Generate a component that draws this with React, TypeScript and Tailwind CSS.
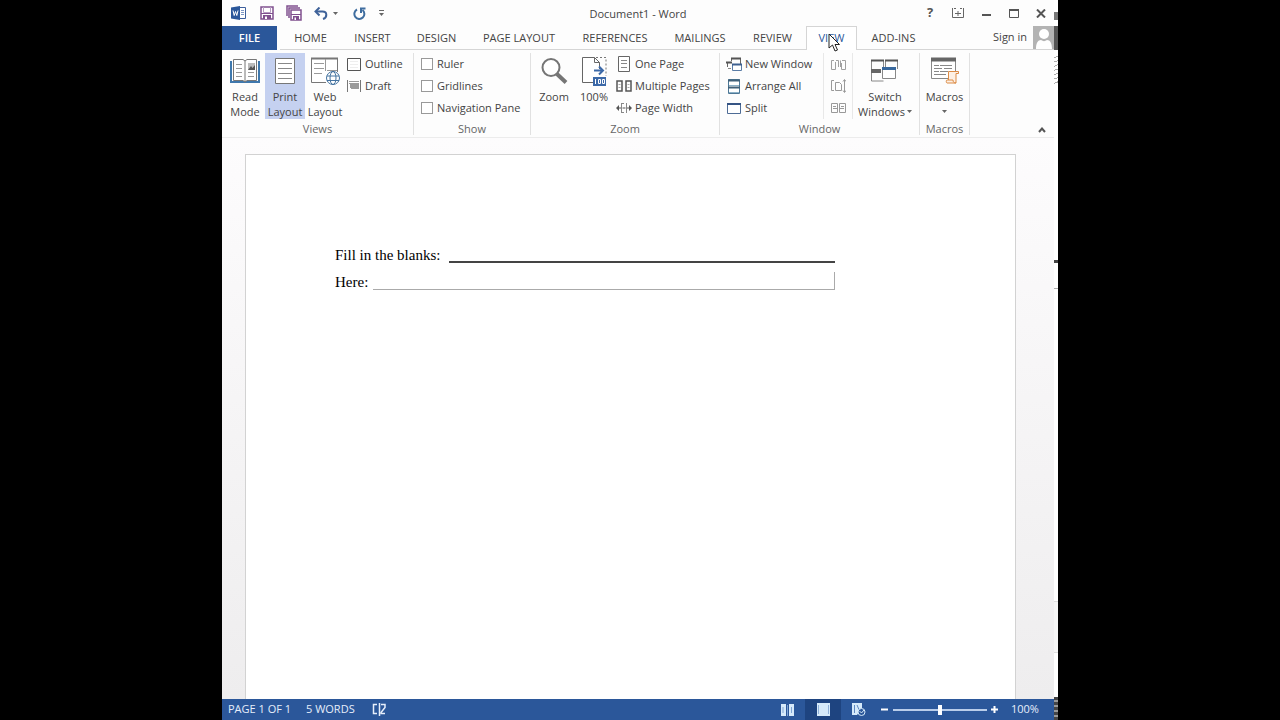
import { useState } from "react";
import type { ReactNode } from "react";

const tabs = [
  { label: "HOME", width: "w-[61px]" },
  { label: "INSERT", width: "w-[63px]" },
  { label: "DESIGN", width: "w-[65px]" },
  { label: "PAGE LAYOUT", width: "w-[100px]" },
  { label: "REFERENCES", width: "w-[92px]" },
  { label: "MAILINGS", width: "w-[78px]" },
  { label: "REVIEW", width: "w-[67px]" },
  { label: "VIEW", width: "w-[51px]" },
  { label: "ADD-INS", width: "w-[73px]" },
];

type IconProps = { w: number; h: number; children: ReactNode };

function Icon({ w, h, children }: IconProps) {
  return (
    <svg width={w} height={h} viewBox={`0 0 ${w} ${h}`} fill="none" className="shrink-0" aria-hidden>
      {children}
    </svg>
  );
}

function WordLogo() {
  return (
    <Icon w={16} h={16}>
      <path d="M8.5 2.5h6v11h-6" fill="#fff" stroke="#3d5f9c" />
      <path d="M10 5.5h3M10 7.5h3M10 9.5h3" stroke="#7d97c4" />
      <path d="M0 2.5 9 1v14l-9-1.5z" fill="#2b579a" />
      <path d="m2 5.5 1.2 5 1.3-4 1.3 4 1.2-5" stroke="#fff" />
    </Icon>
  );
}

function SaveIcon() {
  return (
    <Icon w={14} h={14}>
      <path d="M1 1h12v12H1z" fill="#fff" stroke="#80508f" strokeWidth="1.5" />
      <path d="M3.5 1v5.5h7V1" stroke="#b79cc2" />
      <path d="M1 7.5h12" stroke="#80508f" />
      <path d="M3 9h8v4H3z" fill="#80508f" />
      <path d="M5 10.5h2V13H5z" fill="#fff" />
    </Icon>
  );
}

function SaveAllIcon() {
  return (
    <Icon w={16} h={16}>
      <path d="M1 11V1h11M3 13V3h11" stroke="#80508f" strokeWidth="1.5" />
      <path d="M5 5h10v10H5z" fill="#fff" stroke="#80508f" strokeWidth="1.5" />
      <path d="M5 9.5h10" stroke="#80508f" />
      <path d="M7 11h6v4H7z" fill="#80508f" />
      <path d="M8.5 12.5H10V15H8.500z" fill="#fff" />
    </Icon>
  );
}

function UndoIcon() {
  return (
    <Icon w={14} h={13}>
      <path d="M2 4.500h6.500c5 0 5 6 .5 7.500" stroke="#3f6299" strokeWidth="2" />
      <path d="M5.500.5 1.500 4.500l4 4" stroke="#3f6299" strokeWidth="2" />
    </Icon>
  );
}

function RedoIcon() {
  return (
    <Icon w={13} h={13}>
      <path d="M4 2.500a5 5 0 1 0 5.500.5" stroke="#3f6d9f" strokeWidth="2" />
      <path d="M12.500 1.500H8v4.500" stroke="#3f6d9f" strokeWidth="2" />
    </Icon>
  );
}

function Caret() {
  return (
    <Icon w={5} h={3}>
      <path d="M0 0h5L2.500 3z" fill="#666" />
    </Icon>
  );
}

function ReadModeIcon() {
  return (
    <Icon w={30} h={26}>
      <path d="M1 3v21h28V3" stroke="#3f78ad" strokeWidth="2" />
      <path d="M3.500 1.500h9.500l2 1.500 2-1.500h9.500v21H17l-2 1.500-2-1.500H3.500z" fill="#fff" stroke="#777" />
      <path d="M15 3v21" stroke="#777" />
      <path d="M6 6.500h6M6 10.500h6M6 14.500h6M6 18.500h6M18 14.500h6M18 18.500h6" stroke="#999" />
      <path d="M18 5h7v7h-7z" fill="#bbb" />
      <path d="m18 12 3-4 1.500 2L25 7v5z" fill="#555" />
    </Icon>
  );
}

function PrintLayoutIcon() {
  return (
    <Icon w={20} h={26}>
      <path d="M.5.5h19v25H.5z" fill="#fff" stroke="#777" />
      <path d="M3 5.500h14M3 10.500h14M3 15.500h14M3 20.500h14" stroke="#888" />
    </Icon>
  );
}

function WebLayoutIcon() {
  return (
    <Icon w={30} h={28}>
      <path d="M16 25.500H1.500v-24h26V15" fill="#fff" stroke="#777" />
      <path d="M1 1.500h27" stroke="#777" strokeWidth="2" />
      <path d="M4 6.500h10M4 11.500h10M4 16.500h8M15.500 2v12M17 13.500h10" stroke="#999" />
      <circle cx="23" cy="21" r="6.500" fill="#fff" stroke="#43729f" />
      <ellipse cx="23" cy="21" rx="3" ry="6.500" stroke="#43729f" />
      <path d="M17 19h12M17 23.500h12" stroke="#43729f" />
    </Icon>
  );
}

function OutlineIcon() {
  return (
    <Icon w={14} h={13}>
      <path d="M.5.5h13v12H.5z" fill="#fff" stroke="#555" />
      <path d="M3 3.500h8M3 6.500h8M3 9.500h8" stroke="#eee" />
    </Icon>
  );
}

function DraftIcon() {
  return (
    <Icon w={14} h={12}>
      <path d="M.5 0v12M13.500 0v12" stroke="#777" />
      <path d="M2 1.500h10M2 3.500h10M4 8.500h8" stroke="#999" />
      <path d="M3 3h9v5H3z" fill="#999" />
    </Icon>
  );
}

function MagnifierIcon() {
  return (
    <Icon w={28} h={28}>
      <circle cx="11" cy="10.500" r="8.500" fill="#fff" stroke="#757575" strokeWidth="2" />
      <path d="m17 17 9 8.500" stroke="#757575" strokeWidth="4" />
    </Icon>
  );
}

function HundredIcon() {
  return (
    <Icon w={26} h={30}>
      <path d="M12 26.500H1.500v-25h12l5 5V13" fill="#fff" stroke="#666" />
      <path d="M13.500 1.500v5h5" stroke="#666" />
      <path d="M15 1.500h10V20" stroke="#777" strokeDasharray="2 2" />
      <path d="M13 14.500h9M18 10.500l4 4-4 4" stroke="#3c69a8" strokeWidth="2" />
      <path d="M12 21h13v9H12z" fill="#3c69a8" />
      <path d="M14.500 23v5M17.500 23.500h2v4h-2zM21.500 23.500h2v4h-2z" stroke="#fff" />
    </Icon>
  );
}

function OnePageIcon() {
  return (
    <Icon w={12} h={16}>
      <path d="M.5.5h11v15H.5z" fill="#fff" stroke="#666" />
      <path d="M3 4.500h6M3 7.500h6M3 11.500h6" stroke="#888" />
    </Icon>
  );
}

function MultiplePagesIcon() {
  return (
    <Icon w={16} h={12}>
      <path d="M1 1h5v10H1zM10 1h5v10h-5z" fill="#fff" stroke="#555" strokeWidth="1.500" />
      <path d="M2.500 4.500h2M2.500 7.500h2M11.500 4.500h2M11.500 7.500h2" stroke="#aaa" />
    </Icon>
  );
}

function PageWidthIcon() {
  return (
    <Icon w={16} h={12}>
      <path d="M5.500 1v10M10.500 1v10M6 1.500h2M6 10.500h2" stroke="#888" />
      <path d="M2 6h3M6.500 6h3M11 6h3" stroke="#555" />
      <path d="M3 3v6L0 6zM13 3v6l3-3z" fill="#555" />
    </Icon>
  );
}

function NewWindowIcon() {
  return (
    <Icon w={16} h={14}>
      <path d="M5.500 4V1.500h9V7M1.500 10V5.500H6" stroke="#666" />
      <path d="M5 1.500h10M0 5.500h6" stroke="#555" strokeWidth="2" />
      <path d="M6.500 7.500h9v6h-9z" fill="#fff" stroke="#5a7ca6" />
      <path d="M6 7.500h10" stroke="#3d5f8f" strokeWidth="2" />
      <path d="M2 11.500h3" stroke="#888" />
    </Icon>
  );
}

function ArrangeIcon() {
  return (
    <Icon w={12} h={15}>
      <path d="M.5.5h11v14H.5z" fill="#fff" stroke="#4e7896" />
      <path d="M0 1.500h12M0 8.500h12" stroke="#3f6079" strokeWidth="2" />
      <path d="M1 6.500h10M1 13.500h10" stroke="#8db2c8" />
    </Icon>
  );
}

function SplitIcon() {
  return (
    <Icon w={14} h={11}>
      <path d="M.5 1v9.500h13V1" fill="#fff" stroke="#4e6c96" />
      <path d="M0 1h14" stroke="#355484" strokeWidth="2" />
    </Icon>
  );
}

function SideBySideIcon() {
  return (
    <Icon w={15} h={11}>
      <path d="M.5 10.500v-9H3M.5 10.500h4V3M5 1.500h2.500V8M9.500 8V1.500M11 1.500h3.500v9h-4V4" stroke="#a0a0a0" />
    </Icon>
  );
}

function SyncScrollIcon() {
  return (
    <Icon w={15} h={14}>
      <path
        d="M3 1.500H.5v10H3M4.500 11.500v-8h4l2 2v6zM13.500 1v12M12 2.500l1.500-2 1.500 2M12 11.500l1.500 2 1.500-2"
        stroke="#999"
      />
    </Icon>
  );
}

function ResetPositionIcon() {
  return (
    <Icon w={15} h={12}>
      <path d="M.5 1.500h6v9h-6zM8.500 1.500h6v9h-6zM2 6.500h4M9 6.500h4M2 4.500h3M10 4.500h3" stroke="#999" />
    </Icon>
  );
}

function SwitchIcon() {
  return (
    <Icon w={28} h={24}>
      <path d="M.5 1v21h12M.5 1.500h12V8M14.500 8V1.500h12V10" stroke="#888" />
      <path d="M0 1.500h13M14 1.500h13" stroke="#555" strokeWidth="2" />
      <path d="M0 10h10v4H0z" fill="#666" />
      <path d="M11.500 9.500h13v10h-13z" fill="#fff" stroke="#888" />
      <path d="M11 9.500h14" stroke="#38689d" strokeWidth="3" />
    </Icon>
  );
}

function MacrosIcon() {
  return (
    <Icon w={30} h={28}>
      <path d="M1.500 1.500h24v20h-24z" fill="#fff" stroke="#888" />
      <path d="M1 2.500h25" stroke="#666" strokeWidth="4" />
      <path d="M4 8.500h5M10 8.500h12M4 11.500h8M14 11.500h8M4 14.500h5M10 14.500h8M4 17.500h12" stroke="#888" />
      <path d="M18.500 23v-8.500h10v2H26V26h-9c-1 0-1-3 0-3h6c0 2 1 3 3 3" fill="#fdf0e4" stroke="#dc8b45" />
    </Icon>
  );
}

function PointerIcon() {
  return (
    <Icon w={12} h={19}>
      <path d="M1 1v14l3.500-3 2.500 6 2.500-1L7 11.500h4.500z" fill="#fff" stroke="#222" />
    </Icon>
  );
}

function Group({ label, width, children }: { label: string; width: string; children: ReactNode }) {
  return (
    <section
      aria-label={label}
      className={`flex h-[82px] shrink-0 flex-col justify-between border-r border-[#e1e1e1] ${width}`}
    >
      <div className="flex">{children}</div>
      <div className="text-center leading-3 text-[#666]">{label}</div>
    </section>
  );
}

type BigButtonProps = { icon: ReactNode; lines: string[]; width: string; active?: boolean; caret?: boolean };

function BigButton({ icon, lines, width, active, caret }: BigButtonProps) {
  return (
    <button
      type="button"
      aria-pressed={active}
      className={`flex h-[66px] shrink-0 flex-col items-center ${width} ${active ? "bg-[#c5d1f0]" : "hover:bg-[#e3e9f7]"}`}
    >
      <span className="flex h-9 items-center justify-center">{icon}</span>
      {lines.map((line, index) => (
        <span key={line} className="flex items-center gap-0.5 leading-[15px] whitespace-nowrap">
          {line}
          {caret && index === 1 ? <Caret /> : null}
        </span>
      ))}
      {caret && lines.length === 1 ? (
        <span className="flex h-[15px] items-center">
          <Caret />
        </span>
      ) : null}
    </button>
  );
}

function SmallButton({ icon, label }: { icon: ReactNode; label: string }) {
  return (
    <button type="button" className="flex h-[22px] items-center gap-[3px] whitespace-nowrap hover:bg-[#e3e9f7]">
      <span className="flex w-4 justify-center">{icon}</span>
      {label}
    </button>
  );
}

function ShowOption({ label }: { label: string }) {
  return (
    <label className="flex h-[22px] items-center gap-1 whitespace-nowrap">
      <input type="checkbox" className="size-3 appearance-none border border-[#999] bg-white checked:bg-[#2b579a]" />
      {label}
    </label>
  );
}

function TitleBar() {
  return (
    <header className="relative flex h-[26px] shrink-0 items-center justify-between bg-[#fdfdfd] pl-[9px]">
      <div className="flex items-center">
        <WordLogo />
        <button type="button" aria-label="Save" className="ml-[13px]">
          <SaveIcon />
        </button>
        <button type="button" aria-label="Save all" className="ml-3">
          <SaveAllIcon />
        </button>
        <button type="button" aria-label="Undo" className="ml-3 flex items-center gap-[5px]">
          <UndoIcon />
          <Caret />
        </button>
        <button type="button" aria-label="Redo" className="ml-[15px]">
          <RedoIcon />
        </button>
        <button type="button" aria-label="Customize toolbar" className="ml-[13px] flex flex-col gap-0.5">
          <span className="h-px w-[5px] bg-[#666]" />
          <Caret />
        </button>
      </div>
      <h1 className="pointer-events-none absolute inset-x-0 top-1.5 text-center leading-4">Document1 - Word</h1>
      <div className="flex items-center text-[#555]">
        <button type="button" aria-label="Help" className="w-7 text-[13px] font-bold">
          ?
        </button>
        <button type="button" aria-label="Ribbon display options" className="flex w-7 justify-center">
          <Icon w={12} h={10}>
            <path d="M.5 0v9.500h11V0M2 .5h2M8 .5h2M3 5.500h6M6 3v5" stroke="#666" />
          </Icon>
        </button>
        <button type="button" aria-label="Minimize" className="flex w-7 justify-center">
          <Icon w={9} h={10}>
            <path d="M0 7h9" stroke="#555" strokeWidth="2" />
          </Icon>
        </button>
        <button type="button" aria-label="Maximize" className="flex w-7 justify-center">
          <Icon w={10} h={9}>
            <path d="M.5.5h9v8h-9z" stroke="#555" />
            <path d="M0 1h10" stroke="#555" strokeWidth="2" />
          </Icon>
        </button>
        <button type="button" aria-label="Close" className="flex w-[26px] justify-center">
          <Icon w={10} h={9}>
            <path d="m1 .5 8 8M9 .5l-8 8" stroke="#555" strokeWidth="2" />
          </Icon>
        </button>
      </div>
    </header>
  );
}

function TabBar({ active, onSelect }: { active: string; onSelect: (label: string) => void }) {
  return (
    <nav className="flex h-6 shrink-0 bg-[#fdfdfd] text-[#444]">
      <button type="button" className="mr-[3px] w-[55px] bg-[#2b579a] font-semibold text-white">
        FILE
      </button>
      {tabs.map(({ label, width }) => (
        <button
          key={label}
          type="button"
          onClick={() => onSelect(label)}
          className={`shrink-0 whitespace-nowrap ${width} ${
            label === active
              ? "border-x border-t border-[#d5d5d5] bg-white text-[#2b579a]"
              : "border-b border-[#d5d5d5] pt-0.5"
          }`}
        >
          {label}
        </button>
      ))}
      <div className="flex flex-1 items-center justify-end border-b border-[#d5d5d5]">
        <a href="#sign-in" className="mr-1.5 whitespace-nowrap">
          Sign in
        </a>
        <Icon w={21} h={23}>
          <path d="M0 0h21v23H0z" fill="#b3b3b3" />
          <circle cx="11" cy="8" r="5" fill="#fff" />
          <path d="M3 23c0-6 2-9 5-9 2 1.500 4 1.500 6 0 3 0 5 3 5 9z" fill="#fff" />
        </Icon>
      </div>
    </nav>
  );
}

function Ribbon() {
  return (
    <div className="flex h-[88px] shrink-0 border-b border-[#ececec] bg-[#fdfdfd] pt-[3px]">
      <Group label="Views" width="w-[192px]">
        <div className="flex pl-[3px]">
          <BigButton icon={<ReadModeIcon />} lines={["Read", "Mode"]} width="w-10" />
          <BigButton icon={<PrintLayoutIcon />} lines={["Print", "Layout"]} width="w-10" active />
          <BigButton icon={<WebLayoutIcon />} lines={["Web", "Layout"]} width="w-10" />
        </div>
        <div className="flex flex-col items-start pl-px">
          <SmallButton icon={<OutlineIcon />} label="Outline" />
          <SmallButton icon={<DraftIcon />} label="Draft" />
        </div>
      </Group>
      <Group label="Show" width="w-[117px]">
        <div className="flex flex-col pl-[7px]">
          <ShowOption label="Ruler" />
          <ShowOption label="Gridlines" />
          <ShowOption label="Navigation Pane" />
        </div>
      </Group>
      <Group label="Zoom" width="w-[189px]">
        <div className="flex pl-[3px]">
          <BigButton icon={<MagnifierIcon />} lines={["Zoom"]} width="w-10" />
          <BigButton icon={<HundredIcon />} lines={["100%"]} width="w-10" />
        </div>
        <div className="flex flex-col items-start pl-0.5">
          <SmallButton icon={<OnePageIcon />} label="One Page" />
          <SmallButton icon={<MultiplePagesIcon />} label="Multiple Pages" />
          <SmallButton icon={<PageWidthIcon />} label="Page Width" />
        </div>
      </Group>
      <Group label="Window" width="w-[200px]">
        <div className="flex w-[103px] flex-col items-start pl-1.5">
          <SmallButton icon={<NewWindowIcon />} label="New Window" />
          <SmallButton icon={<ArrangeIcon />} label="Arrange All" />
          <SmallButton icon={<SplitIcon />} label="Split" />
        </div>
        <div className="flex w-[30px] flex-col items-center border-x border-[#e8e8e8]">
          <button type="button" aria-label="View side by side" className="flex h-[22px] items-center">
            <SideBySideIcon />
          </button>
          <button type="button" aria-label="Synchronous scrolling" className="flex h-[22px] items-center">
            <SyncScrollIcon />
          </button>
          <button type="button" aria-label="Reset window position" className="flex h-[22px] items-center">
            <ResetPositionIcon />
          </button>
        </div>
        <BigButton icon={<SwitchIcon />} lines={["Switch", "Windows"]} width="w-16" caret />
      </Group>
      <Group label="Macros" width="w-[50px]">
        <BigButton icon={<MacrosIcon />} lines={["Macros"]} width="w-[49px]" caret />
      </Group>
      <button type="button" aria-label="Collapse the ribbon" className="mr-2 mb-1 ml-auto self-end">
        <Icon w={8} h={6}>
          <path d="m1 5 3-3.500L7 5" stroke="#555" strokeWidth="2" />
        </Icon>
      </button>
    </div>
  );
}

function Page() {
  return (
    <main className="min-h-0 flex-1 bg-linear-to-b from-[#fdfcfd] to-[#eeedee] pt-4 pr-[38px] pl-[23px]">
      <article className="h-full border-x border-t border-[#d2d2d2] bg-white px-[89px] pt-[86px] font-['Liberation_Serif',serif] text-[15px] text-black">
        <div className="flex h-[27px] max-w-[500px] items-start">
          <label htmlFor="blank-one" className="w-[114px] shrink-0 leading-7 whitespace-nowrap">
            Fill in the blanks:
          </label>
          <input id="blank-one" className="h-[22px] min-w-0 flex-1 border-b-2 border-[#444] outline-none" />
        </div>
        <div className="flex h-7 max-w-[500px] items-start">
          <label htmlFor="blank-two" className="w-[38px] shrink-0 leading-7 whitespace-nowrap">
            Here:
          </label>
          <input
            id="blank-two"
            className="mt-1 h-[18px] min-w-0 flex-1 border-r border-b border-[#aaa] outline-none"
          />
        </div>
      </article>
    </main>
  );
}

function StatusBar() {
  const [zoom, setZoom] = useState(50);

  return (
    <footer className="flex h-[21px] shrink-0 items-center bg-[#2b579a] pl-1.5 text-[#e6eefb]">
      <span className="w-[78px]">PAGE 1 OF 1</span>
      <span className="w-[66px]">5 WORDS</span>
      <button type="button" aria-label="Proofing">
        <Icon w={15} h={13}>
          <path d="M5 1.500H1.500v9H5M7.500 0v13" stroke="#e6eefb" strokeWidth="1.500" />
          <path d="M9 1.500h4v3l-4 5v1h4" stroke="#e6eefb" strokeWidth="1.500" />
        </Icon>
      </button>
      <div className="ml-auto flex h-full items-center">
        <button type="button" aria-label="Read mode" className="flex w-9 justify-center">
          <Icon w={13} h={12}>
            <path d="M0 0h5v12H0zM8 0h5v12H8z" fill="#d6eafa" />
            <path d="M6.500 1v11M2 3v6M10.500 3v6" stroke="#7fa4d4" />
          </Icon>
        </button>
        <button
          type="button"
          aria-label="Print layout"
          className="flex h-full w-9 items-center justify-center bg-[#1e4480]"
        >
          <Icon w={13} h={13}>
            <path d="M0 0h13v13H0z" fill="#d6eafa" />
            <path d="M1.500 2v9M11.500 2v9" stroke="#8fb0d8" />
          </Icon>
        </button>
        <button type="button" aria-label="Web layout" className="flex w-9 justify-center">
          <Icon w={14} h={13}>
            <path d="M0 0h10v5l-5 7H0z" fill="#d6eafa" />
            <path d="M2.500 2v8M5 2l3 7" stroke="#5f88c0" />
            <circle cx="9.500" cy="9" r="3.500" fill="#2b579a" stroke="#d6eafa" />
            <path d="m7.500 8 2 2 2.500-3" stroke="#d6eafa" />
          </Icon>
        </button>
        <button
          type="button"
          aria-label="Zoom out"
          className="ml-1 flex w-3 justify-start"
          onClick={() => setZoom(zoom - 5)}
        >
          <Icon w={7} h={7}>
            <path d="M0 3.500h7" stroke="#fff" strokeWidth="2" />
          </Icon>
        </button>
        <input
          type="range"
          aria-label="Zoom level"
          value={zoom}
          onChange={(event) => setZoom(Number(event.target.value))}
          className="h-3 w-[94px] appearance-none bg-[linear-gradient(#b9cdea,#b9cdea)] bg-size-[100%_2px] bg-center bg-no-repeat [&::-webkit-slider-thumb]:h-2.5 [&::-webkit-slider-thumb]:w-1 [&::-webkit-slider-thumb]:appearance-none [&::-webkit-slider-thumb]:bg-white"
        />
        <button
          type="button"
          aria-label="Zoom in"
          className="ml-1 flex w-3 justify-start"
          onClick={() => setZoom(zoom + 5)}
        >
          <Icon w={7} h={7}>
            <path d="M0 3.500h7M3.500 0v7" stroke="#fff" strokeWidth="2" />
          </Icon>
        </button>
        <span className="ml-2 w-[43px]">100%</span>
      </div>
    </footer>
  );
}

// Sliver of the window that sits behind this one
function BackgroundWindow() {
  return (
    <aside aria-hidden className="flex w-1 shrink-0 flex-col bg-white">
      <div className="mt-3 h-2 bg-[#777]" />
      <div className="mt-1.5 h-6 bg-[#555]" />
      <div className="mt-1 h-8 bg-[repeating-linear-gradient(160deg,#fff_0_3px,#aaa_3px_4px)]" />
      <div className="mt-[174px] h-[3px] bg-[#444]" />
      <div className="mt-[25px] h-px bg-[#aaa]" />
      <div className="mt-auto mb-11 h-[52px] border-y border-[#ddd] bg-[#f6f6f6]" />
      <div className="h-[23px] bg-[repeating-linear-gradient(#444_0_3px,#999_3px_5px)]" />
    </aside>
  );
}

export default function App() {
  const [activeTab, setActiveTab] = useState("VIEW");

  return (
    <div className="flex h-screen bg-black px-[222px] font-['Open_Sans','Noto_Sans',sans-serif] text-[11px] text-[#444]">
      <div className="relative flex min-w-0 flex-1 flex-col overflow-hidden bg-white">
        <TitleBar />
        <TabBar active={activeTab} onSelect={setActiveTab} />
        <Ribbon />
        <Page />
        <StatusBar />
        <div className="pointer-events-none absolute top-[33px] left-[606px]">
          <PointerIcon />
        </div>
      </div>
      <BackgroundWindow />
    </div>
  );
}
